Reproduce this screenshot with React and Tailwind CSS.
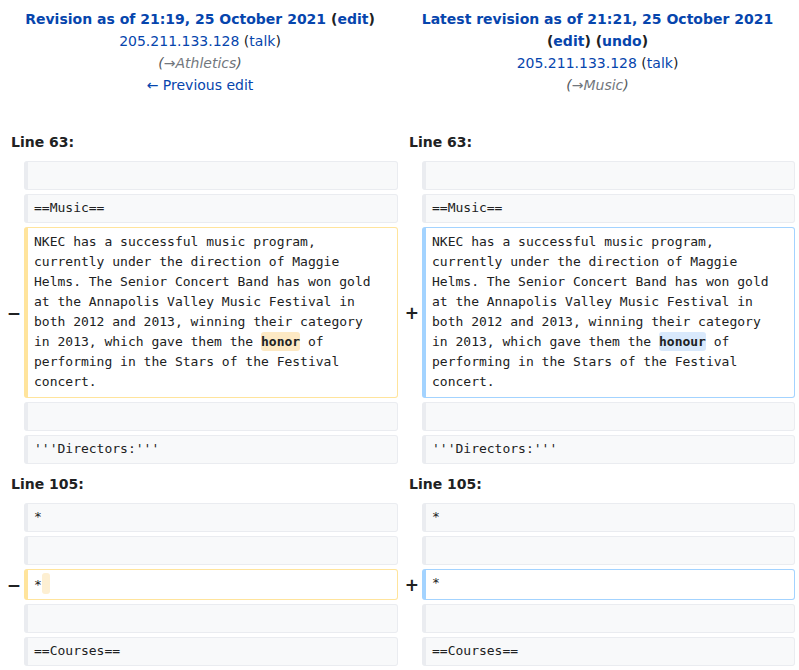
import React from "react";

const sans = { fontFamily: '"DejaVu Sans", "Noto Sans", sans-serif' };

function Box({ kind = "ctx", big = false, children }) {
  const cls =
    kind === "del"
      ? "bg-white border-[#ffe49c] border-l-[#ffe49c]"
      : kind === "add"
      ? "bg-white border-[#a3d3ff] border-l-[#a3d3ff]"
      : "bg-[#f8f9fa] border-[#eaecf0] border-l-[#eaecf0]";
  const pad = big ? "pt-[4px] pb-[5px]" : "pt-[3px] pb-[4px]";
  return (
    <div
      className={`border border-solid border-l-4 rounded-[3px] pl-[6px] pr-[18px] ${pad} min-h-[29px] text-[13px] leading-[20px] text-[#202122] whitespace-pre-wrap break-words ${cls}`}
      style={{ fontFamily: '"DejaVu Sans Mono", "Liberation Mono", monospace' }}
    >
      {children}
    </div>
  );
}

function Marker({ children }) {
  return (
    <div className="flex items-center justify-end pr-[3px] text-[17px] leading-[20px] font-bold text-[#202122]" style={sans}>
      {children}
    </div>
  );
}

function CtxRow({ text }) {
  return (
    <div className="grid grid-cols-[24px_374px_24px_373px]">
      <div />
      <Box>{text}</Box>
      <div />
      <Box>{text}</Box>
    </div>
  );
}

function LineRow({ n }) {
  return (
    <div className="grid grid-cols-[398px_399px] h-[31px] items-center text-[14px] font-bold text-[#202122] leading-[22px]" style={sans}>
      <div className="pl-[11px]">Line {n}:</div>
      <div className="pl-[11px]">Line {n}:</div>
    </div>
  );
}

const Del = ({ children }) => (
  <span className="bg-[#fde9c4] font-bold rounded-[3px] py-[2px]">{children}</span>
);
const Add = ({ children }) => (
  <span className="bg-[#d9e9fc] font-bold rounded-[3px] py-[2px]">{children}</span>
);

export default function App() {
  const blue = "text-[#0645ad]";
  return (
    <div className="w-[799px] bg-white text-[#202122]" style={sans}>
      <div className="grid grid-cols-[398px_399px] pt-[8px] text-[14px] leading-[22px] text-center">
        <div className="pl-[2px]">
          <div className="font-bold">
            <span className={blue}>Revision as of 21:19, 25 October 2021</span>{" "}
            (<span className={blue}>edit</span>)
          </div>
          <div>
            <span className={blue}>205.211.133.128</span> (<span className={blue}>talk</span>)
          </div>
          <div className="italic text-[#54595d]">
            (<span className="text-[#72777d]">→Athletics</span>)
          </div>
          <div className={blue}>← Previous edit</div>
        </div>
        <div>
          <div className="font-bold">
            <span className={blue}>Latest revision as of 21:21, 25 October 2021</span>
          </div>
          <div className="font-bold">
            (<span className={blue}>edit</span>) (<span className={blue}>undo</span>)
          </div>
          <div>
            <span className={blue}>205.211.133.128</span> (<span className={blue}>talk</span>)
          </div>
          <div className="italic text-[#54595d]">
            (<span className="text-[#72777d]">→Music</span>)
          </div>
        </div>
      </div>

      <div className="mt-[30px] flex flex-col gap-[4px] pb-[4px]">
        <LineRow n={63} />
        <CtxRow text={"\u00a0"} />
        <CtxRow text={"==Music=="} />
        <div className="grid grid-cols-[24px_374px_24px_373px]">
          <Marker>−</Marker>
          <Box kind="del" big>
            NKEC has a successful music program, currently under the direction of Maggie Helms. The Senior Concert Band has won gold at the Annapolis Valley Music Festival in both 2012 and 2013, winning their category in 2013, which gave them the <Del>honor</Del> of performing in the Stars of the Festival concert.
          </Box>
          <Marker>+</Marker>
          <Box kind="add" big>
            NKEC has a successful music program, currently under the direction of Maggie Helms. The Senior Concert Band has won gold at the Annapolis Valley Music Festival in both 2012 and 2013, winning their category in 2013, which gave them the <Add>honour</Add> of performing in the Stars of the Festival concert.
          </Box>
        </div>
        <CtxRow text={"\u00a0"} />
        <CtxRow text={"'''Directors:'''"} />
        <LineRow n={105} />
        <CtxRow text={"*"} />
        <CtxRow text={"\u00a0"} />
        <div className="grid grid-cols-[24px_374px_24px_373px]">
          <Marker>−</Marker>
          <Box kind="del">
            *<span className="bg-[#fdefd2] rounded-[3px] inline-block w-[8px] h-[21px] align-[-5px]"></span>
          </Box>
          <Marker>+</Marker>
          <Box kind="add">*</Box>
        </div>
        <CtxRow text={"\u00a0"} />
        <CtxRow text={"==Courses=="} />
      </div>
    </div>
  );
}
